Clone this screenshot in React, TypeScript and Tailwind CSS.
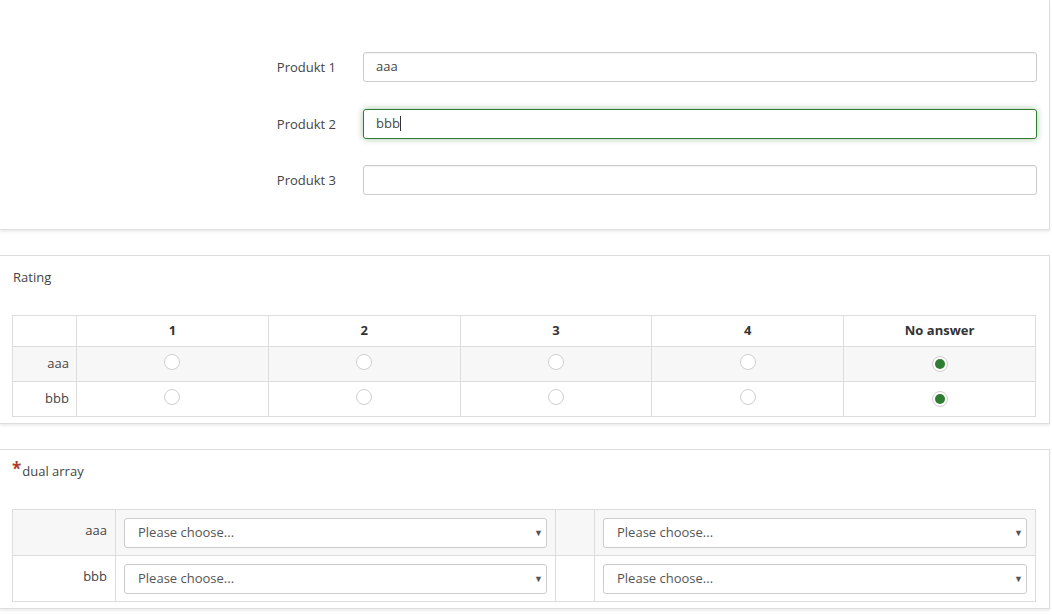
import React from "react";

const cardCls =
  "bg-white border-r border-b border-[#dedede] shadow-[0_2px_2px_rgba(0,0,0,0.07)]";

function TextRow({ label, value, focused }: { label: string; value: string; focused?: boolean }) {
  return (
    <div className="flex items-center h-[30px]">
      <div className="w-[336px] text-right text-[13px] text-[#444] leading-[18px]">{label}</div>
      <div
        className={
          "ml-[27px] w-[674px] h-[30px] rounded-[3px] bg-white flex items-center px-[12px] text-[13px] text-[#444] " +
          (focused
            ? "border border-[#2e7d32] shadow-[0_0_6px_rgba(46,125,50,0.45)]"
            : "border border-[#cccccc] shadow-[inset_0_1px_1px_rgba(0,0,0,0.05)]")
        }
      >
        <span>{value}</span>
        {focused && <span className="inline-block w-px h-[15px] bg-[#333]" />}
      </div>
    </div>
  );
}

function Radio({ checked }: { checked?: boolean }) {
  return (
    <span className="inline-flex items-center justify-center w-[16px] h-[16px] rounded-full border border-[#cfcfcf] bg-white">
      {checked && <span className="w-[10px] h-[10px] rounded-full bg-[#2e7d32]" />}
    </span>
  );
}

function Select() {
  return (
    <div className="h-[30px] rounded-[3px] border border-[#cccccc] bg-white flex items-center justify-between pl-[13px] pr-[3px] text-[13px] text-[#555]">
      <span>Please choose...</span>
      <span className="text-[9px] text-[#555] leading-none">▼</span>
    </div>
  );
}

export default function App() {
  const cols = ["1", "2", "3", "4", "No answer"];
  const rows = [
    { label: "aaa", shade: true },
    { label: "bbb", shade: false },
  ];
  return (
    <div className="w-[1052px] h-[615px] overflow-hidden bg-white font-['Open_Sans',sans-serif] text-[#444]">
      {/* short free text fields */}
      <div className={cardCls + " w-[1050px] h-[230px] pt-[52px] flex flex-col gap-[26.5px]"}>
        <TextRow label="Produkt 1" value="aaa" />
        <TextRow label="Produkt 2" value="bbb" focused />
        <TextRow label="Produkt 3" value="" />
      </div>

      {/* rating array */}
      <div className={cardCls + " border-t w-[1050px] h-[169px] mt-[25px] pt-[12px]"}>
        <div className="pl-[13px] text-[13px] leading-[18px] text-[#444]">Rating</div>
        <table className="ml-[12px] mt-[29px] w-[1024px] border-collapse text-[13px]">
          <thead>
            <tr className="h-[31px]">
              <th className="w-[64px] border border-[#dddddd]" />
              {cols.map((c) => (
                <th key={c} className="w-[192px] border border-[#dddddd] font-bold text-[#333] text-center">
                  {c}
                </th>
              ))}
            </tr>
          </thead>
          <tbody>
            {rows.map((r) => (
              <tr key={r.label} className={"h-[35px] " + (r.shade ? "bg-[#f7f7f7]" : "bg-white")}>
                <td className="border border-[#dddddd] text-right pr-[7px] text-[#444]">{r.label}</td>
                {cols.map((c, i) => (
                  <td key={c} className="border border-[#dddddd] text-center align-middle">
                    <span className="inline-flex relative top-[1px]">
                      <Radio checked={i === cols.length - 1} />
                    </span>
                  </td>
                ))}
              </tr>
            ))}
          </tbody>
        </table>
      </div>

      {/* dual scale dropdown array */}
      <div className={cardCls + " border-t w-[1050px] h-[160px] mt-[25px] pt-[12px]"}>
        <div className="pl-[12px] text-[13px] leading-[18px] text-[#444] flex items-start">
          <span className="text-[#b03a2e] text-[17px] leading-[14px] font-bold mr-px">*</span>
          <span>dual array</span>
        </div>
        <table className="ml-[12px] mt-[29px] w-[1024px] border-collapse text-[13px]">
          <tbody>
            {rows.map((r) => (
              <tr key={r.label} className={r.shade ? "bg-[#f7f7f7]" : "bg-white"}>
                <td className="w-[103px] h-[46px] border border-[#dddddd] text-right pr-[8px] align-top pt-[11px] text-[#444]">
                  {r.label}
                </td>
                <td className="w-[440px] border border-[#dddddd] px-[8px]">
                  <Select />
                </td>
                <td className="w-[39px] border border-[#dddddd]" />
                <td className="border border-[#dddddd] pl-[8px] pr-[8px]">
                  <Select />
                </td>
              </tr>
            ))}
          </tbody>
        </table>
      </div>
    </div>
  );
}
